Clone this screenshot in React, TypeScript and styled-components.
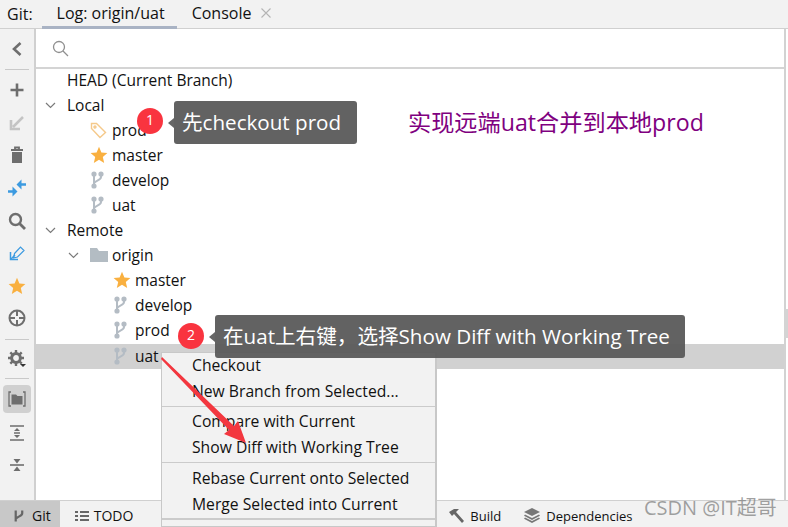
import React from "react";
import styled, { createGlobalStyle } from "styled-components";

const Global = createGlobalStyle`
  html, body { margin: 0; padding: 0; background: #fff; }
  * { box-sizing: border-box; }
`;

const FONT = `"Open Sans", "Noto Sans", "Noto Sans CJK SC", sans-serif`;

const Page = styled.div`
  position: relative;
  width: 788px;
  height: 527px;
  overflow: hidden;
  display: flex;
  flex-direction: column;
  font-family: ${FONT};
  font-size: 15.5px;
  color: #111;
  background: #fff;
`;
const TabBar = styled.div`
  height: 29px;
  flex: none;
  display: flex;
  align-items: stretch;
  background: #f2f2f2;
  border-bottom: 1px solid #d0d0d0;
  padding-left: 7px;
  font-size: 16px;
`;
const TabLabel = styled.div`
  display: flex;
  align-items: center;
  height: 28px;
  margin-right: 9px;
`;
const Tab = styled.div<{ $active?: boolean }>`
  display: flex;
  align-items: center;
  gap: 10px;
  height: 29px;
  padding: 0 12px 0 15px;
  border-bottom: 3px solid ${(p) => (p.$active ? "#a9b3c4" : "transparent")};
`;
const Body = styled.div`
  flex: 1;
  min-height: 0;
  display: flex;
`;
const SideBar = styled.div`
  width: 36px;
  flex: none;
  display: flex;
  flex-direction: column;
  align-items: center;
  background: #f2f2f2;
  border-right: 2px solid #d0d0d0;
`;
const SideButton = styled.div<{ $active?: boolean; $h?: number; $top?: number }>`
  width: 28px;
  height: ${(p) => p.$h ?? 32.6}px;
  margin-top: ${(p) => p.$top ?? 0}px;
  flex: none;
  display: flex;
  align-items: center;
  justify-content: center;
  border-radius: 4px;
  background: ${(p) => (p.$active ? "#d0d0d0" : "transparent")};
`;
const SideRule = styled.div<{ $top: number; $bottom: number }>`
  width: 24px;
  height: 1px;
  flex: none;
  background: #c9c9c9;
  margin: ${(p) => p.$top}px 0 ${(p) => p.$bottom}px;
`;
const Main = styled.div`
  flex: 1;
  min-width: 0;
  display: flex;
  flex-direction: column;
  border-right: 2px solid #d2d2d2;
  margin-right: 2px;
`;
const SearchRow = styled.div`
  height: 40px;
  flex: none;
  display: flex;
  align-items: center;
  padding-left: 16px;
  border-bottom: 2px solid #d4d4d4;
`;
const Tree = styled.div`
  flex: 1;
  display: flex;
  flex-direction: column;
`;
const Row = styled.div<{ $depth: number; $selected?: boolean }>`
  height: 25px;
  flex: none;
  display: flex;
  align-items: center;
  padding: 0 0 ${(p) => (p.$selected ? 1 : 3)}px ${(p) => p.$depth}px;
  background: ${(p) => (p.$selected ? "#d1d1d1" : "transparent")};
`;
const Chevron = styled.span`
  width: 22px;
  flex: none;
  display: flex;
  align-items: center;
`;
const RowIcon = styled.span`
  width: 22px;
  flex: none;
  display: flex;
  align-items: center;
`;
const BottomBar = styled.div`
  height: 27px;
  flex: none;
  display: flex;
  align-items: stretch;
  background: #f2f2f2;
  border-top: 1px solid #d0d0d0;
`;
const BottomTab = styled.div<{ $active?: boolean; $left?: number; $size?: number; $pad?: number; $gap?: number }>`
  display: flex;
  align-items: center;
  gap: ${(p) => p.$gap ?? 5}px;
  font-size: ${(p) => p.$size ?? 14}px;
  padding: 3px 9px 0 ${(p) => p.$pad ?? 12}px;
  margin-left: ${(p) => p.$left ?? 0}px;
  background: ${(p) => (p.$active ? "#c8c8c8" : "transparent")};
`;
const Callout = styled.div<{ $x: number; $y: number; $w: number; $h: number; $size: number }>`
  position: absolute;
  left: ${(p) => p.$x}px;
  top: ${(p) => p.$y}px;
  width: ${(p) => p.$w}px;
  height: ${(p) => p.$h}px;
  display: flex;
  align-items: center;
  padding: 0 0 3px 8px;
  background: rgba(88, 88, 88, 0.94);
  border-radius: 3px;
  color: #fff;
  font-size: ${(p) => p.$size}px;
  white-space: nowrap;
  &::before {
    content: "";
    position: absolute;
    left: -6px;
    top: 50%;
    margin-top: -5px;
    border-style: solid;
    border-width: 5px 6px 5px 0;
    border-color: transparent #666 transparent transparent;
  }
`;
const Badge = styled.div<{ $x: number; $y: number }>`
  position: absolute;
  left: ${(p) => p.$x}px;
  top: ${(p) => p.$y}px;
  width: 26px;
  height: 26px;
  border-radius: 50%;
  background: #f9343f;
  color: #fff;
  font-size: 14px;
  display: flex;
  align-items: center;
  justify-content: center;
  padding-bottom: 3px;
`;
const Note = styled.div`
  position: absolute;
  left: 408px;
  top: 106px;
  color: #800080;
  font-size: 23.2px;
  line-height: 32px;
  white-space: nowrap;
`;
const Menu = styled.div`
  position: absolute;
  left: 161px;
  top: 352px;
  width: 276px;
  height: 175px;
  background: #f2f2f2;
  border: 1px solid #c8c8c8;
  border-right-width: 2px;
`;
const MenuItem = styled.div`
  height: 26px;
  display: flex;
  align-items: center;
  padding: 0 0 2px 30px;
  font-size: 15.7px;
  white-space: nowrap;
`;
const MenuRule = styled.div<{ $thick?: boolean; $bottom: number }>`
  height: ${(p) => (p.$thick ? 2 : 1)}px;
  background: #cbcbcb;
  margin: ${(p) => (p.$thick ? 0 : 1)}px 0 ${(p) => p.$bottom}px;
`;
const Arrow = styled.svg`
  position: absolute;
  left: 160px;
  top: 355px;
  pointer-events: none;
`;
const Watermark = styled.div`
  position: absolute;
  left: 644px;
  top: 494px;
  color: rgba(130, 130, 130, 0.75);
  font-size: 20px;
  line-height: 28px;
  white-space: nowrap;
`;
const Scroll = styled.div`
  position: absolute;
  right: 0;
  top: 309px;
  width: 4px;
  height: 29px;
  background: #d4d4d4;
`;

const C = { grey: "#6e6e6e", light: "#afb1b3", blue: "#3c9ae0", gold: "#f9b040" };

const ChevronDown = () => (
  <svg width="11" height="7" viewBox="0 0 11 7" fill="none" stroke="#7a7a7a" strokeWidth="1.2">
    <path d="M1 1l4.5 4.5L10 1" />
  </svg>
);
const Branch = () => (
  <svg width="14" height="18" viewBox="0 0 14 18" fill="none" stroke="#b4bcc4" strokeWidth="2">
    <path d="M4 3v12M11 3v3c0 3-4 3-7 6" />
    <circle cx="4" cy="3" r="1.6" fill="#b4bcc4" />
    <circle cx="4" cy="15" r="1.6" fill="#b4bcc4" />
    <circle cx="11" cy="3" r="1.6" fill="#b4bcc4" />
  </svg>
);
const Star = ({ size = 18 }: { size?: number }) => (
  <svg width={size} height={size} viewBox="0 0 18 18">
    <path d="M9 .8l2.4 5.6 6 .5-4.6 4 1.4 6L9 13.7 3.8 16.9l1.4-6-4.6-4 6-.5z" fill={C.gold} />
  </svg>
);
const TagIcon = () => (
  <svg width="17" height="17" viewBox="0 0 17 17" fill="none" stroke="#f5c98a" strokeWidth="1.4">
    <path d="M1.5 4V1.5H6.5L15.5 10.5 10 15.5 1.5 6.5z" />
    <circle cx="5" cy="5" r="1" />
  </svg>
);
const Folder = () => (
  <svg width="18" height="14" viewBox="0 0 18 14">
    <path d="M0 0h7l2 3h9v11H0z" fill="#b3bcc3" />
  </svg>
);
const Search = () => (
  <svg width="17" height="17" viewBox="0 0 17 17" fill="none" stroke="#8f8f8f" strokeWidth="1.3">
    <circle cx="7" cy="7" r="5.5" />
    <path d="M11 11l5 5" />
  </svg>
);
const SI = ({ children, w = 18 }: { children: React.ReactNode; w?: number }) => (
  <svg width={w} height={18} viewBox="0 0 18 18" fill="none">
    {children}
  </svg>
);
const Gear = () => (
  <SI>
    <circle cx="8" cy="8" r="4.4" stroke={C.grey} strokeWidth="3" />
    <path d="M8 0v3M8 13v3M0 8h3M13 8h3M2.3 2.3l2 2M11.7 11.7l2 2M13.7 2.3l-2 2M2.3 13.7l2-2" stroke={C.grey} strokeWidth="2.4" />
    <path d="M12 14h6l-3 3z" fill="#333" />
  </SI>
);

export default function App() {
  return (
    <Page>
      <Global />
      <TabBar>
        <TabLabel>Git:</TabLabel>
        <Tab $active>Log: origin/uat</Tab>
        <Tab>
          Console
          <svg width="10" height="10" viewBox="0 0 10 10" stroke="#b4b4b4" strokeWidth="1.1">
            <path d="M.5.5l9 9M9.5.5l-9 9" />
          </svg>
        </Tab>
      </TabBar>
      <Body>
        <SideBar>
          <SideButton $h={40}>
            <SI><path d="M12.5 3L6 9l6.5 6" stroke={C.grey} strokeWidth="2.6" /></SI>
          </SideButton>
          <SideRule $top={0} $bottom={4} />
          <SideButton>
            <SI><path d="M9 2.5v13M2.5 9h13" stroke={C.grey} strokeWidth="2.6" /></SI>
          </SideButton>
          <SideButton>
            <SI><path d="M15 3L5 13M3 6v9h9" stroke="#c4c4c4" strokeWidth="2.6" /></SI>
          </SideButton>
          <SideButton>
            <SI><path d="M3 4h12M7 3V1.5h4V3" stroke={C.grey} strokeWidth="1.8" /><path d="M4 6h10v11H4z" fill={C.grey} /></SI>
          </SideButton>
          <SideButton>
            <SI>
              <path d="M18 5.5h-6M0 12.5h6" stroke={C.blue} strokeWidth="2.6" />
              <path d="M13.5 0.5V10.5L8.5 5.5zM4.5 7.5V17.5L9.5 12.5z" fill={C.blue} />
            </SI>
          </SideButton>
          <SideButton>
            <SI><circle cx="7.5" cy="7.5" r="5.5" stroke={C.grey} strokeWidth="2.4" /><path d="M11.5 11.5l5.5 5.5" stroke={C.grey} strokeWidth="2.8" /></SI>
          </SideButton>
          <SideButton>
            <SI>
              <path d="M2.5 8v7.5H10" stroke={C.blue} strokeWidth="1.5" />
              <path d="M3 15l4-4" stroke={C.blue} strokeWidth="1.5" />
              <path d="M6.5 9.5L12.5 3l3.5 3.5-6.5 6.5-4 1z" stroke={C.blue} strokeWidth="1.2" />
            </SI>
          </SideButton>
          <SideButton><Star /></SideButton>
          <SideButton>
            <SI><circle cx="9" cy="9" r="7.5" stroke={C.grey} strokeWidth="2" /><path d="M9 2v5M9 11v5M2 9h5M11 9h5" stroke={C.grey} strokeWidth="2" /></SI>
          </SideButton>
          <SideRule $top={4} $bottom={3} />
          <SideButton><Gear /></SideButton>
          <SideRule $top={3} $bottom={6} />
          <SideButton $active $h={28}>
            <SI>
              <path d="M3 2H1v14h2M15 2h2v14h-2" stroke={C.grey} strokeWidth="1.3" />
              <path d="M3.5 4.5h4.5l1.5 1.5h5v8.5h-11z" fill={C.grey} />
            </SI>
          </SideButton>
          <SideButton $top={3}>
            <SI>
              <path d="M2 2h14M2 16h14M6 9h6" stroke={C.grey} strokeWidth="1.6" />
              <path d="M6 7h6L9 4zM6 11h6L9 14z" fill={C.grey} />
            </SI>
          </SideButton>
          <SideButton>
            <SI><path d="M2 9h14" stroke={C.grey} strokeWidth="1.6" /><path d="M5.5 3h7L9 7.5zM5.5 15h7L9 10.5z" fill={C.grey} /></SI>
          </SideButton>
        </SideBar>
        <Main>
          <SearchRow><Search /></SearchRow>
          <Tree>
            <Row $depth={31}>HEAD (Current Branch)</Row>
            <Row $depth={9}><Chevron><ChevronDown /></Chevron>Local</Row>
            <Row $depth={54}><RowIcon><TagIcon /></RowIcon>prod</Row>
            <Row $depth={54}><RowIcon><Star /></RowIcon>master</Row>
            <Row $depth={54}><RowIcon><Branch /></RowIcon>develop</Row>
            <Row $depth={54}><RowIcon><Branch /></RowIcon>uat</Row>
            <Row $depth={9}><Chevron><ChevronDown /></Chevron>Remote</Row>
            <Row $depth={32}><Chevron><ChevronDown /></Chevron><RowIcon><Folder /></RowIcon>origin</Row>
            <Row $depth={77}><RowIcon><Star /></RowIcon>master</Row>
            <Row $depth={77}><RowIcon><Branch /></RowIcon>develop</Row>
            <Row $depth={77}><RowIcon><Branch /></RowIcon>prod</Row>
            <Row $depth={77} $selected><RowIcon><Branch /></RowIcon>uat</Row>
          </Tree>
        </Main>
      </Body>
      <BottomBar>
        <BottomTab $active $gap={7}>
          <svg width="13" height="18" viewBox="0 0 14 18" fill="none" stroke="#666" strokeWidth="2.4">
            <path d="M4 3v12M11 3v3c0 3-4 3-7 6" />
          </svg>
          Git
        </BottomTab>
        <BottomTab $pad={15}>
          <svg width="14" height="12" viewBox="0 0 14 12" stroke="#666" strokeWidth="1.8">
            <path d="M0 2h3M5 2h9M0 6h3M5 6h9M0 10h3M5 10h9" />
          </svg>
          TODO
        </BottomTab>
        <BottomTab $left={293} $size={13}>
          <svg width="18" height="16" viewBox="0 0 18 16" fill="#666">
            <path d="M2 4L7 1h5l-3 3 8 9-2 2-8-9-2 2z" />
          </svg>
          Build
        </BottomTab>
        <BottomTab $left={2} $size={13} $gap={6}>
          <svg width="16" height="15" viewBox="0 0 16 15" fill="#777">
            <path d="M8 0l8 4-8 4-8-4z" />
            <path d="M1 6.5L8 10l7-3.5 1 1.2L8 12 0 7.7zM1 9.5L8 13l7-3.5 1 1.2L8 15 0 10.7z" />
          </svg>
          Dependencies
        </BottomTab>
      </BottomBar>
      <Scroll />
      <Note>实现远端uat合并到本地prod</Note>
      <Callout $x={174} $y={101} $w={183} $h={43} $size={20.6}>先checkout prod</Callout>
      <Menu>
        <MenuItem>Checkout</MenuItem>
        <MenuItem>New Branch from Selected...</MenuItem>
        <MenuRule $bottom={2} />
        <MenuItem>Compare with Current</MenuItem>
        <MenuItem>Show Diff with Working Tree</MenuItem>
        <MenuRule $bottom={3} />
        <MenuItem>Rebase Current onto Selected</MenuItem>
        <MenuItem>Merge Selected into Current</MenuItem>
        <MenuRule $thick $bottom={0} />
      </Menu>
      <Callout $x={215} $y={315} $w={470} $h={43} $size={20.6}>在uat上右键，选择Show Diff with Working Tree</Callout>
      <Badge $x={137} $y={108}>1</Badge>
      <Badge $x={178} $y={323}>2</Badge>
      <Arrow width="100" height="95" viewBox="0 0 100 95">
        <path d="M2 2L74 71L78 66L86 88L64 79L69 75L1 4z" fill="#f3373f" />
      </Arrow>
      <Watermark>CSDN @IT超哥</Watermark>
    </Page>
  );
}
